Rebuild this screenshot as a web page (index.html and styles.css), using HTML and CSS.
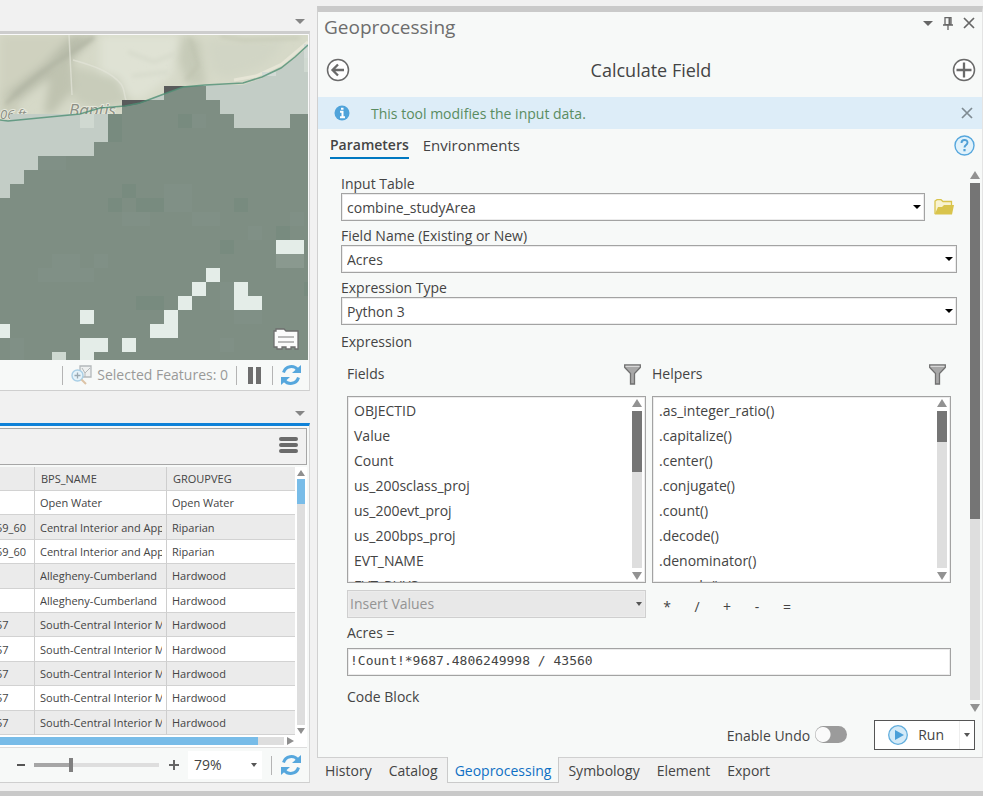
FILE: index.html
```html
<!DOCTYPE html>
<html lang="en">
<head>
<meta charset="utf-8">
<title>Calculate Field</title>
<link rel="stylesheet" href="styles.css">
</head>
<body>
<svg class="defs" width="0" height="0" aria-hidden="true">
  <symbol id="refresh" viewBox="0 0 20 20">
    <path d="M2.5 7.500C4.500 0.500 13 0 16.500 4.500" fill="none" stroke="#56a7dd" stroke-width="3"/>
    <path d="M20 0v8h-9z" fill="#56a7dd"/>
    <path d="M17.500 12.500C15.500 19.500 7 20 3.500 15.500" fill="none" stroke="#56a7dd" stroke-width="3"/>
    <path d="M0 20v-8h9z" fill="#56a7dd"/>
  </symbol>
  <symbol id="funnel" viewBox="0 0 17 21">
    <path d="M.7 1h15.600v2.500L10.500 9.500v10.500h-4V9.500L.7 3.500z" fill="#a8a8a8" stroke="#707070" stroke-width="1.300"/>
    <path d="M1.500 2.300h14" stroke="#dedede" stroke-width="1.200"/>
  </symbol>
  <symbol id="down" viewBox="0 0 10 5"><path d="M0 0h10L5 5z" fill="currentColor"/></symbol>
  <symbol id="up" viewBox="0 0 10 8"><path d="M5 0l5 8H0z" fill="currentColor"/></symbol>
  <symbol id="cross" viewBox="0 0 12 12"><path d="M1 1l10 10M11 1L1 11" stroke="currentColor" stroke-width="1.700" fill="none"/></symbol>
</svg>

<main class="shell">
  <div class="left">
    <section class="pane map-pane">
      <div class="strip"><button class="icon-btn" aria-label="Map views"><svg width="10" height="5"><use href="#down"/></svg></button></div>
      <div class="map-frame">
        <svg class="map" viewBox="0 35 308 325" preserveAspectRatio="xMinYMin slice">
          <defs>
            <filter id="soft" x="-20%" y="-20%" width="140%" height="140%"><feGaussianBlur stdDeviation="4"/></filter>
            <filter id="fine" x="-20%" y="-20%" width="140%" height="140%"><feGaussianBlur stdDeviation="2"/></filter>
          </defs>
          <rect y="35" width="308" height="325" fill="#d6d9c8"/>
          <g filter="url(#soft)">
            <path d="M0 35h72L40 68 0 96z" fill="#cfd1bf"/>
            <path d="M72 35h24L70 62 24 96 0 118V98L44 64z" fill="#b9bdab"/>
            <path d="M52 62l20-2 2 30-22 24H44z" fill="#bfc3b0"/>
            <path d="M100 35h80l-8 40-30 24-26-4-16-24z" fill="#dfe2d4"/>
            <path d="M182 35l18 6 6 44h-18l-10-26z" fill="#c6cab8"/>
            <path d="M206 40h80l-20 24-36 14-18-6z" fill="#d1d5c5"/>
            <path d="M74 66l44 12 12 24-30 8-26-8z" fill="#c8ccba"/>
            <path d="M0 88l12 8 10 20H0z" fill="#c9ccb9"/>
          </g>
          <g fill="none" filter="url(#fine)">
            <path d="M6 104C30 78 60 60 94 37" stroke="#b0b4a3" stroke-width="3"/>
            <path d="M128 52l26 10 20-8M132 76l36-4" stroke="#d5d9ca" stroke-width="3"/>
            <path d="M190 38l8 28-12 14" stroke="#bdc1ad" stroke-width="2"/>
            <path d="M220 36l24 4 56-2" stroke="#bfc3af" stroke-width="2"/>
          </g>
          <path d="M69 35l3 60M73 60c22 6 38 12 48 24 5 7 2 14 8 22" fill="none" stroke="#e2e4d8" stroke-opacity=".7" stroke-width="1.500"/>
          <path d="M308 42L282 64 256 76 234 80" fill="none" stroke="#e6e5d6" stroke-width="3"/>
          <g class="map-label">
            <text x="0" y="119" font-size="13">06 ft</text>
            <text x="69" y="116" font-size="17">Baptis</text>
          </g>
          <path d="M10 114h112v-8l18-3 24-9 19-7 22-2h38l19-7 19-9 14-11 13-11v140L0 240V121l10-1z" fill="#c3cdc6"/>
          <path d="M304 44h4v14h-4zM262 72h14v4h-14z" fill="#d3dad5"/>
          <path d="M80 114h14v14H80z" fill="#d0d9d1"/>
          <path d="M304 58h4v14h-4z" fill="#d0d9d1"/>
          <path d="M0 198h10v-14h14v-14h14v-14h56v-14h14v-28h14v-14h42V86h42v14h14v14h14v14h56v-14h18v246H0z" fill="#7e8e83"/>
          <path d="M122 100h28l-12 4-16 3zM164 86h21l-21 8z" fill="#595b5b"/>
          <g fill="#788b7f">
            <path d="M108 114h14v28h-14zM178 114h14v14h-14zM122 184h14v14h-14zM108 198h14v14h-14zM136 198h28v14h-28zM234 198h14v14h-14zM220 240h14v14h-14zM276 226h14v14h-14zM136 296h28v14h-28zM304 282h4v14h-4z"/>
          </g>
          <g fill="#809086">
            <path d="M38 156h28v14H38zM192 114h14v14h-14zM164 184h28v28h-28zM122 212h28v14h-28zM192 212h28v14h-28zM52 254h28v14H52zM94 254h14v14H94zM38 268h56v14H38zM248 226h14v14h-14zM290 212h14v14h-14zM220 282h14v28h-14zM234 310h28v14h-28zM220 338h14v14h-14zM10 338h14v22H10z"/>
          </g>
          <path d="M276 254h28v14h-28z" fill="#8a998f"/>
          <g fill="#e4ede8" shape-rendering="crispEdges">
            <path d="M276 240h28v14h-28zM206 268h14v14h-14zM192 282h14v14h-14zM178 296h14v14h-14zM164 310h14v28h-28v-14h14zM234 282h14v14h14v14h-28zM80 310h14v14H80zM0 324h10v14H0zM80 338h28v14H94v8H80zM122 338h14v14h-14z"/>
          </g>
          <path d="M52 352h14v8H52z" fill="#ced9d1"/>
          <path d="M0 120l8 1 72-7 20-6 25-2 15-3 24-9 19-7 22-2 38-2 19-6 19-9 14-11 13-12" fill="none" stroke="#4d8f74" stroke-width="1.500" stroke-opacity=".8"/>
          <path d="M274 331h2v-2h8l2 2h12v18h-3v-2h-4v2h-5v-2h-4v2h-5v-2h-3z" fill="#fbfbfb" stroke="#6e6e6e" stroke-width="1.300"/>
          <path d="M278 337h16M278 342h16" stroke="#7a7a7a" stroke-width="1.200"/>
        </svg>
      </div>
      <div class="status map-status">
        <i class="rule"></i>
        <span class="selected">
          <svg width="21" height="20" viewBox="0 0 21 20"><path d="M9 1h11v11H9z" fill="#eef0f0" stroke="#b4b8ba" stroke-width="1.300"/><path d="M11 3l3 5 5-5M14 8v4" fill="none" stroke="#b4b8ba"/><circle cx="6.500" cy="10.500" r="5.500" fill="#e5f3fa" stroke="#a9cfe6" stroke-width="1.400"/><path d="M3.500 10.500h6M6.500 7.500v6" stroke="#9aa9b2" stroke-width="1.300"/><path d="M10.500 14.500l4.500 4.500" stroke="#dcc3a6" stroke-width="2"/></svg>
          Selected Features: 0
        </span>
        <i class="rule"></i>
        <button class="icon-btn pause" aria-label="Pause drawing"><svg width="13" height="17"><path d="M0 0h5v17H0zM8 0h5v17H8z" fill="#6e6e6e"/></svg></button>
        <i class="rule"></i>
        <button class="icon-btn" aria-label="Refresh map"><svg width="20" height="20"><use href="#refresh"/></svg></button>
      </div>
    </section>

    <section class="pane table-pane">
      <div class="strip"><button class="icon-btn" aria-label="Table views"><svg width="10" height="5"><use href="#down"/></svg></button></div>
      <div class="table-body">
        <div class="table-tools"><button class="icon-btn" aria-label="Table menu"><svg width="19" height="16"><path d="M2 2h15M2 8h15M2 14h15" stroke="#6b6b6b" stroke-width="4" stroke-linecap="round"/></svg></button></div>
        <div class="grid-wrap">
          <div class="grid-view">
            <table class="attributes">
              <colgroup><col class="c1"><col class="c2"><col></colgroup>
              <thead><tr><th></th><th>BPS_NAME</th><th>GROUPVEG</th></tr></thead>
              <tbody>
                <tr><td></td><td>Open Water</td><td>Open Water</td></tr>
                <tr><td>59_60</td><td>Central Interior and App</td><td>Riparian</td></tr>
                <tr><td>59_60</td><td>Central Interior and App</td><td>Riparian</td></tr>
                <tr><td></td><td>Allegheny-Cumberland</td><td>Hardwood</td></tr>
                <tr><td></td><td>Allegheny-Cumberland</td><td>Hardwood</td></tr>
                <tr><td>57</td><td>South-Central Interior M</td><td>Hardwood</td></tr>
                <tr><td>57</td><td>South-Central Interior M</td><td>Hardwood</td></tr>
                <tr><td>57</td><td>South-Central Interior M</td><td>Hardwood</td></tr>
                <tr><td>57</td><td>South-Central Interior M</td><td>Hardwood</td></tr>
                <tr><td>57</td><td>South-Central Interior M</td><td>Hardwood</td></tr>
              </tbody>
            </table>
          </div>
          <div class="vbar slim"><svg width="8" height="6"><path d="M4 0l4 6H0z" fill="#8f8f8f"/></svg><div class="track"><div class="thumb blue"></div></div><svg width="8" height="6"><path d="M0 0h8L4 6z" fill="#8f8f8f"/></svg></div>
        </div>
        <div class="hbar"><div class="track"><div class="thumb"></div></div><svg width="7" height="8"><path d="M0 0l7 4-7 4z" fill="#8f8f8f"/></svg></div>
        <div class="status zoom-status">
          <button class="icon-btn" aria-label="Zoom out"><svg width="8" height="12"><path d="M0 6h8" stroke="#555" stroke-width="2"/></svg></button>
          <input class="slider" type="range" min="0" max="100" value="29" aria-label="Zoom">
          <button class="icon-btn" aria-label="Zoom in"><svg width="10" height="12"><path d="M0 6h10M5 1v10" stroke="#666" stroke-width="2"/></svg></button>
          <span class="combo zoom-combo"><select aria-label="Zoom level"><option>79%</option></select><svg width="6" height="4"><path d="M0 0h6L3 4z" fill="#555"/></svg></span>
          <i class="rule"></i>
          <button class="icon-btn" aria-label="Refresh table"><svg width="20" height="20"><use href="#refresh"/></svg></button>
        </div>
      </div>
    </section>
  </div>

  <div class="right">
    <section class="tool">
      <header class="tool-bar">
        <h1>Geoprocessing</h1>
        <div class="window-btns">
          <button class="icon-btn" aria-label="Options"><svg width="10" height="5"><use href="#down"/></svg></button>
          <button class="icon-btn" aria-label="Pin"><svg width="10" height="13"><path d="M2 .7h6v7H2zM0 8h10M5 8v5" fill="none" stroke="#666" stroke-width="1.300"/><path d="M5.500 1h2v7h-2z" fill="#666"/></svg></button>
          <button class="icon-btn" aria-label="Close"><svg width="12" height="12"><use href="#cross"/></svg></button>
        </div>
      </header>
      <div class="tool-head">
        <button class="icon-btn" aria-label="Back"><svg width="24" height="24"><circle cx="12" cy="12" r="10.500" fill="#fff" stroke="#6a6a6a" stroke-width="1.500"/><path d="M18 12H7M12 6.500L6.500 12l5.500 5.500" fill="none" stroke="#6a6a6a" stroke-width="2.300"/></svg></button>
        <h2>Calculate Field</h2>
        <button class="icon-btn" aria-label="Add"><svg width="24" height="24"><circle cx="12" cy="12" r="10.500" fill="#fff" stroke="#6a6a6a" stroke-width="1.500"/><path d="M4.500 12h15M12 4.500v15" stroke="#6a6a6a" stroke-width="2.300"/></svg></button>
      </div>
      <div class="banner">
        <svg width="16" height="16"><circle cx="8" cy="8" r="7.500" fill="#4fa3da"/><path d="M6 6.800h2.500V12M6 12.300h5M7 3.800h2.500" stroke="#fff" stroke-width="2" fill="none"/></svg>
        <p>This tool modifies the input data.</p>
        <button class="icon-btn soft" aria-label="Dismiss"><svg width="12" height="12"><use href="#cross"/></svg></button>
      </div>
      <nav class="tabs">
        <a class="active" href="#parameters">Parameters</a>
        <a href="#environments">Environments</a>
        <button class="icon-btn" aria-label="Help"><svg width="21" height="21"><circle cx="10.500" cy="10.500" r="9.500" fill="#e1f2fb" stroke="#56a7dd" stroke-width="1.400"/><path d="M7.500 8c0-4 6-4 6-.5 0 2.500-3 2.500-3 5" fill="none" stroke="#4f9fd6" stroke-width="1.900"/><path d="M9.400 14h2.200v2.300H9.400z" fill="#4f9fd6"/></svg></button>
      </nav>

      <div class="scroll" id="parameters">
        <form class="form">
          <label for="input-table">Input Table</label>
          <div class="with-folder">
            <span class="combo"><select id="input-table"><option>combine_studyArea</option></select><svg width="8" height="4"><path d="M0 0h8L4 4z"/></svg></span>
            <button type="button" class="icon-btn" aria-label="Browse"><svg width="20" height="16"><path d="M1 15V2l2-1.300h4L9 2.500h8.500V6" fill="#f8f3d0" stroke="#d9c44c" stroke-width="1.300"/><path d="M.7 15.500L4 8h4l2-2h10l-2 9.500z" fill="#d9c44c"/></svg></button>
          </div>
          <label for="field-name">Field Name (Existing or New)</label>
          <span class="combo"><select id="field-name"><option>Acres</option></select><svg width="8" height="4"><path d="M0 0h8L4 4z"/></svg></span>
          <label for="expression-type">Expression Type</label>
          <span class="combo"><select id="expression-type"><option>Python 3</option></select><svg width="8" height="4"><path d="M0 0h8L4 4z"/></svg></span>
          <h3>Expression</h3>
          <div class="builder">
            <div class="lists">
              <div class="list-col">
                <div class="list-head"><span id="fields-label">Fields</span><button type="button" class="icon-btn" aria-label="Filter fields"><svg width="17" height="21"><use href="#funnel"/></svg></button></div>
                <div class="list">
                  <ul role="listbox" aria-labelledby="fields-label">
                    <li role="option">OBJECTID</li><li role="option">Value</li><li role="option">Count</li><li role="option">us_200sclass_proj</li><li role="option">us_200evt_proj</li><li role="option">us_200bps_proj</li><li role="option">EVT_NAME</li><li role="option">EVT_PHYS</li>
                  </ul>
                  <div class="vbar"><svg width="10" height="8"><use href="#up"/></svg><div class="track"><div class="thumb tall"></div></div><svg width="10" height="8"><path d="M0 0h10L5 8z" fill="currentColor"/></svg></div>
                </div>
              </div>
              <div class="list-col">
                <div class="list-head"><span id="helpers-label">Helpers</span><button type="button" class="icon-btn" aria-label="Filter helpers"><svg width="17" height="21"><use href="#funnel"/></svg></button></div>
                <div class="list">
                  <ul role="listbox" aria-labelledby="helpers-label">
                    <li role="option">.as_integer_ratio()</li><li role="option">.capitalize()</li><li role="option">.center()</li><li role="option">.conjugate()</li><li role="option">.count()</li><li role="option">.decode()</li><li role="option">.denominator()</li><li role="option">.encode()</li>
                  </ul>
                  <div class="vbar"><svg width="10" height="8"><use href="#up"/></svg><div class="track"><div class="thumb short"></div></div><svg width="10" height="8"><path d="M0 0h10L5 8z" fill="currentColor"/></svg></div>
                </div>
              </div>
            </div>
            <div class="lists insert">
              <span class="combo disabled"><select disabled aria-label="Insert Values"><option>Insert Values</option></select><svg width="6" height="4"><path d="M0 0h6L3 4z" fill="#555"/></svg></span>
              <div class="ops"><button type="button">*</button><button type="button">/</button><button type="button">+</button><button type="button">-</button><button type="button">=</button></div>
            </div>
            <label for="expression">Acres =</label>
            <input class="code" id="expression" type="text" value="!Count!*9687.4806249998 / 43560">
            <h3 class="code-title">Code Block</h3>
          </div>
        </form>
        <div class="vbar main-bar"><svg width="10" height="8"><use href="#up"/></svg><div class="track"><div class="thumb main-thumb"></div></div><svg width="10" height="8"><path d="M0 0h10L5 8z" fill="currentColor"/></svg></div>
      </div>

      <footer class="actions">
        <label class="undo" for="undo">Enable Undo</label>
        <input class="toggle" id="undo" type="checkbox">
        <div class="run">
          <button class="run-main"><svg width="20" height="20"><circle cx="10" cy="10" r="9.300" fill="#d3eaf8" stroke="#62aedd" stroke-width="1.300"/><path d="M7 5v10l9-5z" fill="#4b9fd8"/></svg>Run</button>
          <button class="run-more" aria-label="Run options"><svg width="6" height="4"><path d="M0 0h6L3 4z" fill="#555"/></svg></button>
        </div>
      </footer>
    </section>
    <nav class="dock">
      <a href="#history">History</a><a href="#catalog">Catalog</a><a class="active" href="#geoprocessing">Geoprocessing</a><a href="#symbology">Symbology</a><a href="#element">Element</a><a href="#export">Export</a>
    </nav>
  </div>
</main>
</body>
</html>
```
FILE: styles.css
```css
* { box-sizing: border-box; }

body {
  margin: 0;
  background: #f1f1f1;
  color: #444;
  font: 14px/20px "Open Sans", "Noto Sans", sans-serif;
}

h1, h2, h3, p, ul { margin: 0; padding: 0; font-weight: 400; }
ul { list-style: none; }
a { color: inherit; text-decoration: none; }
svg { display: block; flex: none; }
button, input, select { font: inherit; color: inherit; margin: 0; }
.defs { position: absolute; }

.icon-btn {
  display: flex;
  padding: 0;
  border: 0;
  background: none;
  color: #666;
}
.icon-btn.soft { color: #7f8b92; }

.shell {
  display: grid;
  grid-template-columns: minmax(0, 317fr) minmax(0, 666fr);
  height: 100vh;
  border-bottom: 5px solid #c9c9c9;
}

/* Left side: map and attribute table */
.left {
  display: flex;
  flex-direction: column;
  padding: 0 7px 8px 0;
  min-height: 0;
}
.strip {
  display: flex;
  justify-content: flex-end;
  align-items: flex-end;
  height: 31px;
  padding: 0 5px 7px 0;
}
.strip .icon-btn { color: #858585; }

.map-pane {
  display: flex;
  flex-direction: column;
  flex: 1;
  min-height: 0;
}
.map-frame {
  flex: 1;
  min-height: 0;
  border-top: 3px solid #cdcdcd;
  border-right: 1px solid #d5d5d5;
  padding: 1px 1px 0 0;
  background: #fafafa;
}
.map { width: 100%; height: 100%; }
.map-label {
  fill: #8c8f85;
  font-family: "Open Sans", sans-serif;
  font-style: italic;
  stroke: #e6e8dc;
  stroke-width: 2px;
  paint-order: stroke;
}

.status {
  display: flex;
  align-items: center;
  justify-content: flex-end;
  background: #f7f9f8;
}
.map-status {
  height: 31px;
  gap: 8px;
  padding: 0 8px 0 0;
  border-right: 1px solid #d5d5d5;
  border-bottom: 1px solid #cfcfcf;
}
.pause { margin: 0 3px; }
.rule { width: 1px; height: 19px; background: #b4b4b4; flex: none; }
.selected {
  display: flex;
  gap: 5px;
  align-items: center;
  color: #999;
  white-space: nowrap;
}

.table-pane .strip { height: 32px; }
.table-body {
  border-top: 3px solid #0f82d8;
  border-right: 1px solid #d5d5d5;
  border-bottom: 1px solid #cfcfcf;
  background: #f7f9f8;
}
.table-tools {
  display: flex;
  align-items: center;
  justify-content: flex-end;
  height: 37px;
  margin: 2px 2px 2px 0;
  padding: 0 8px 3px 0;
  border: 1px solid #a6a6a6;
  border-left: 0;
  background: #f1f1f1;
}
.grid-wrap { display: flex; background: #fff; margin-right: 2px; }
.grid-view { flex: 1; min-width: 0; }
.attributes {
  width: 100%;
  height: 268px;
  table-layout: fixed;
  border-collapse: separate;
  border-spacing: 0;
  font-size: 11px;
  line-height: 16px;
}
.c1 { width: 35px; }
.c2 { width: 132px; }
.attributes tr { height: 24px; }
.attributes th, .attributes td {
  padding: 1px 4px 0 5px;
  border-right: 1px solid #cecece;
  border-bottom: 1px solid #d2d2d2;
  overflow: hidden;
  white-space: nowrap;
  text-align: left;
  font-weight: 400;
}
/* Clip at the padding so a long name stops short of the column line */
.attributes td { overflow: clip; overflow-clip-margin: content-box; }
.attributes th { background: #ebebeb; padding-left: 6px; }
.attributes td:first-child { padding-left: 0; text-indent: -4px; }
.attributes th:last-child, .attributes td:last-child { border-right: 0; }
.attributes tbody tr:nth-child(even) { background: #ebebeb; }

/* Scroll bars */
.vbar {
  display: flex;
  flex-direction: column;
  align-items: center;
  gap: 4px;
  width: 16px;
  padding: 2px 0;
  color: #929292;
  flex: none;
}
.track { background: #dedede; }
.vbar .track { flex: 1; width: 10px; min-height: 0; }
.thumb { background: #757575; }
.vbar.slim { width: 12px; gap: 3px; padding: 3px 0 1px; }
.vbar.slim .track { width: 8px; }
.thumb.blue { height: 25px; background: #78bce8; }
.tall { height: 61px; }
.short { height: 31px; }
.main-thumb { height: 65%; }

.hbar {
  display: flex;
  align-items: center;
  gap: 3px;
  height: 13px;
  margin-right: 2px;
  padding: 0 13px 0 0;
  background: #fff;
  border-bottom: 1px solid #ddd;
}
.hbar .track { flex: 1; height: 8px; }
.hbar .thumb { width: 91%; height: 8px; background: #78bce8; }

.zoom-status { height: 34px; gap: 9px; padding-right: 8px; }
.slider {
  appearance: none;
  width: 125px;
  height: 15px;
  margin-right: 1px;
  background: linear-gradient(to right, #a6a6a6 30%, #dedede 30%) center / 100% 4px no-repeat;
}
.slider::-webkit-slider-thumb {
  appearance: none;
  width: 4px;
  height: 14px;
  background: #808080;
}

/* Right side: tool pane */
.right {
  display: flex;
  flex-direction: column;
  min-width: 0;
  min-height: 0;
  padding: 6px 0 8px 0;
}
.tool {
  display: flex;
  flex-direction: column;
  flex: 1;
  min-height: 0;
  border: 1px solid #d0d0d0;
  border-top: 6px solid #cacaca;
  border-right-color: #e4e4e4;
  background: #f7f9f8;
}
.tool-bar {
  display: flex;
  justify-content: space-between;
  align-items: center;
  height: 30px;
  padding: 0 7px 0 6px;
}
.tool-bar h1 { font-size: 19px; line-height: 26px; color: #6d6d6d; }
.window-btns { display: flex; align-items: center; gap: 10px; padding-bottom: 8px; }
.tool-head {
  display: flex;
  justify-content: space-between;
  align-items: center;
  height: 55px;
  padding: 0 6px 0 8px;
}
.tool-head h2 { font-size: 18px; line-height: 26px; }
.banner {
  display: flex;
  align-items: center;
  height: 32px;
  padding: 0 9px 0 16px;
  background: #ddedf8;
  color: #598c61;
}
.banner p { flex: 1; padding: 2px 0 0 21px; }
.tabs {
  display: flex;
  align-items: center;
  gap: 14px;
  height: 34px;
  padding: 0 7px 2px 12px;
}
.tabs a { padding: 3px 0 2px; border-bottom: 2px solid transparent; font-size: 15px; }
.tabs .active { border-color: #0079c1; font-size: 14px; font-weight: 600; }
.tabs .icon-btn { margin-left: auto; }

.scroll { display: flex; flex: 1; min-height: 0; padding: 6px 0 0 23px; }
.form { flex: 1; min-width: 0; padding-right: 10px; }
.form > label {
  display: block;
  padding-top: 6px;
  line-height: 18px;
}
.form > h3 { font-size: 14px; line-height: 34px; }
.main-bar.vbar { width: 15px; padding-bottom: 0; }
.with-folder { display: flex; align-items: center; gap: 9px; padding-right: 3px; }

.combo { position: relative; display: block; flex: 1; min-width: 0; height: 28px; }
.combo select {
  display: block;
  appearance: none;
  width: 100%;
  height: 28px;
  padding: 2px 20px 0 5px;
  border: 1px solid #a3a3a3;
  border-radius: 0;
  background: #fff;
  box-shadow: inset 0 0 0 1px #ececec;
}
.combo svg { position: absolute; right: 4px; top: 12px; pointer-events: none; }
.disabled.combo select {
  padding: 0 20px 0 2px;
  border-color: #cfcfcf;
  background: #e8e8e8;
  color: #949494;
  opacity: 1;
}
.zoom-combo.combo { width: 74px; flex: none; }
.zoom-combo.combo select { padding: 0 0 0 6px; border: 0; box-shadow: none; }
.zoom-combo.combo svg { right: 5px; }

.builder { padding: 0 6px; }
.lists { display: grid; grid-template-columns: 1fr 1fr; gap: 6px; }
.list-head {
  display: flex;
  justify-content: space-between;
  align-items: center;
  height: 30px;
  padding-right: 5px;
}
.list-head + .list { margin-top: 7px; }
.list {
  display: flex;
  height: 187px;
  border: 1px solid #a3a3a3;
  background: #fff;
  box-shadow: inset 0 0 0 1px #ececec;
}
.list ul { flex: 1; overflow: hidden; padding: 1px 0 0 6px; line-height: 25px; }
.insert { margin-top: 7px; align-items: center; }
.ops { display: flex; padding-top: 6px; }
.ops button { width: 30px; padding: 0; border: 0; background: none; }
.builder > label { display: block; line-height: 30px; }
.code {
  display: block;
  width: 100%;
  height: 28px;
  padding: 0 2px 3px;
  border: 1px solid #a3a3a3;
  box-shadow: inset 0 0 0 1px #ececec;
  background: #fff;
  font: 13px/20px "DejaVu Sans Mono", monospace;
}
.code-title { font-size: 14px; line-height: 42px; }

.actions {
  display: flex;
  align-items: center;
  justify-content: flex-end;
  height: 45px;
  padding: 0 7px 0 0;
}
.undo { padding-top: 2px; }
.toggle {
  appearance: none;
  width: 32px;
  height: 17px;
  margin: 0 27px 0 5px;
  border-radius: 9px;
  background: radial-gradient(circle at 8px 50%, #fafafa 7px, #9b9b9b 8px);
}
.run { display: flex; height: 30px; border: 1px solid #555; background: #fff; }
.run button { display: flex; align-items: center; padding: 0; border: 0; background: none; }
.run .run-main { gap: 10px; padding: 0 15px 0 13px; }
.run .run-more { padding: 0 4px; border-left: 1px solid #eee; }

.dock { display: flex; gap: 1px; height: 26px; margin-top: -1px; }
.dock a { padding: 4px 7px 0; border: 1px solid transparent; border-top: 0; white-space: nowrap; }
.dock .active { border-color: #cacaca; background: #f7f9f8; color: #0f70c4; }
```
